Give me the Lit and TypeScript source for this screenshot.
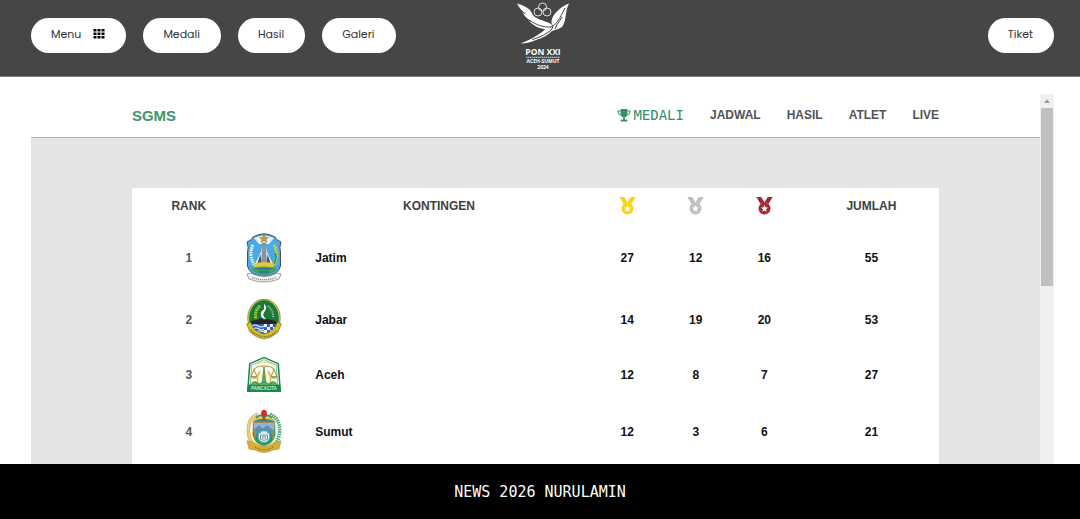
import { LitElement, html, svg, css } from "lit";
import { customElement } from "lit/decorators.js";

const jatim = html`<svg width="36" height="50" viewBox="0 0 36 50" aria-hidden="true">
  <path d="M7 4Q13 .8 18 .8T29 4Q30 7 35 9Q33 14 34.5 20V33Q33 41 18 45Q3 41 1.500 33V20Q3 14 1 9Q6 7 7 4Z" fill="#4aaae4" stroke="#4b4b55" stroke-width="1"/>
  <path d="M8 5Q18 0 28 5L23 11H13Z" fill="#e9eef2"/>
  <path d="M18 1.500l1.200 3 3.200.1-2.500 1.900.9 3-2.800-1.800-2.800 1.800.9-3-2.500-1.900 3.200-.1z" fill="#c3a02e" stroke="#6a5b22" stroke-width=".4"/>
  <path d="M8 33L15 19 17 9H19L21 19 28 33Z" fill="#f7f9fa"/>
  <path d="M16.700 10h2.600l1.200 22h-5z" fill="#8c96a8" stroke="#555f70" stroke-width=".5"/>
  <path d="M11 31l3.500-10 1 10zM20.500 31l1-10 3.500 10z" fill="#45586c"/>
  <path d="M7 12Q2 22 9 33" fill="none" stroke="#eef7f4" stroke-width="3" stroke-dasharray="1.600 .8"/>
  <path d="M28 12Q34 22 27 33" fill="none" stroke="#d9d23c" stroke-width="3" stroke-dasharray="1.600 .8"/>
  <path d="M29.500 20Q31 28 26 34" fill="none" stroke="#2f8b46" stroke-width="1.400"/>
  <path d="M7 31Q18 27 29 31L27 34H9Z" fill="#e7c832"/>
  <path d="M10 34H26V37H10Z" fill="#2ea0d8"/>
  <path d="M5 35Q18 32 31 35Q28 41 18 43Q8 41 5 35Z" fill="#42a065"/>
  <path d="M11 36H25M13 39H23" stroke="#1c71ad" stroke-width="1.300"/>
  <path d="M1 41L5 40Q18 47 31 40L35 41 33 46Q18 52 3 46Z" fill="#f4f2f2" stroke="#777" stroke-width=".7"/>
  <path d="M6 44.500Q18 49 30 44.500" fill="none" stroke="#8b8888" stroke-width="1.300" stroke-dasharray="1.200 .8"/>
</svg>`;

const jabar = html`<svg width="36" height="41" viewBox="0 0 36 41" aria-hidden="true">
  <ellipse cx="18" cy="19" rx="15.500" ry="18.300" fill="#167a3a" stroke="#d8c934" stroke-width="1.300"/>
  <ellipse cx="18" cy="19" rx="16.300" ry="18.900" fill="none" stroke="#4d4b20" stroke-width=".5"/>
  <path d="M14 7Q8 12 10 20" fill="none" stroke="#b7ca38" stroke-width="3" stroke-dasharray="1.500 .8"/>
  <path d="M22 7Q28 12 27 19" fill="none" stroke="#a8c8a0" stroke-width="2" stroke-dasharray="1.200 1.100"/>
  <path d="M18 5Q22 8 19 12Q15 16 20 20Q15 20 15 16Q14 13 18 10Z" fill="#f6fbf5"/>
  <path d="M4 22L11 21 15 19 18 21 22 20 32 23V27H4Z" fill="#242524"/>
  <path d="M5 25H31Q29 35 18 37Q7 35 5 25Z" fill="#3462bd"/>
  <path d="M6 27Q9 25 12 27T18 27M7 30Q10 28 13 30T18 30M10 33Q13 31 18 33" fill="none" stroke="#eef4ff" stroke-width="1.100"/>
  <path d="M18 25h3v3h-3zM24 25h3v3h-3zM21 28h3v3h-3zM27 28h3v3h-3zM18 31h3v3h-3zM24 31h3v3h-3z" fill="#f5f7fb"/>
  <path d="M.6 25L5 23Q6 32 18 35Q30 32 31 23L35.400 25 32 33Q26 39 18 40Q10 39 4 33Z" fill="#d9bf2c" stroke="#6c5f18" stroke-width=".6"/>
  <path d="M5 31Q10 37 18 37.500T31 31" fill="none" stroke="#766817" stroke-width="1.200" stroke-dasharray="1.300 .8"/>
</svg>`;

const aceh = html`<svg width="36" height="37" viewBox="0 0 36 36" preserveAspectRatio="none" aria-hidden="true">
  <path d="M18 .8L33 7L35 35H1L3 7Z" fill="#148b4a"/>
  <path d="M18 2.300L31.500 7.800 33 28H3L4.500 7.800Z" fill="#fff"/>
  <path d="M18 3.500L30.500 8.700 31.500 28H4.500L5.500 8.700Z" fill="#fbfaf0" stroke="#2c9a58" stroke-width=".6"/>
  <path d="M9 8Q18 4 27 8" fill="none" stroke="#dac98a" stroke-width="1.500" stroke-dasharray="1.500 .8"/>
  <path d="M18 10L20 27H16Z" fill="#73ab2f" stroke="#327b35" stroke-width=".6"/>
  <path d="M18 10Q12 9 8 13M18 10Q24 9 28 13M8 13L5 20H11ZM28 13L25 20H31Z" fill="none" stroke="#ad9951" stroke-width="1"/>
  <path d="M5 20Q8 23 11 20M25 20Q28 23 31 20" fill="none" stroke="#ad9951" stroke-width="1.400"/>
  <path d="M12 27Q10 20 14 15M24 27Q26 20 22 15" fill="none" stroke="#d6c34d" stroke-width="1.700"/>
  <path d="M5 28Q9 22 13 28M23 28Q27 22 31 28M12 28Q18 23 24 28" fill="#6eb53c" stroke="#26934c" stroke-width="1"/>
  <path d="M1.800 28H34.200L35 35H1Z" fill="#148b4a"/>
  <text x="18" y="33.500" text-anchor="middle" font-family="Liberation Sans, sans-serif" font-size="4.500" font-weight="700" fill="#d5ecd8">PANCACITA</text>
</svg>`;

const sumut = html`<svg width="36" height="45" viewBox="0 0 36 44" preserveAspectRatio="none" aria-hidden="true">
  <path d="M12 5Q1 10 2.500 23Q3 30 8 35" fill="none" stroke="#dcb95b" stroke-width="3.600"/>
  <path d="M12 5Q1 10 2.500 23Q3 30 8 35" fill="none" stroke="#f7edc8" stroke-width="1.500" stroke-dasharray="1 1.200"/>
  <path d="M24 5Q35 10 33.500 23Q33 30 28 35" fill="none" stroke="#45a77b" stroke-width="3.600" stroke-dasharray="1.500 .8"/>
  <path d="M7 10Q18 5 29 10L30 25Q28 35 18 38Q8 35 6 25Z" fill="#e2c364"/>
  <path d="M7.500 12Q18 7 28.500 12L29 26Q27 34 18 36Q9 34 7 26Z" fill="#249667"/>
  <path d="M8 13H28V22H8Z" fill="#86b9da"/>
  <path d="M8 20L13 16 17 19 21 16 28 21V25H8Z" fill="#678bad"/>
  <path d="M8 13H28" stroke="#bb7b61" stroke-width="1.400"/>
  <path d="M9 21V29M27 21V29" stroke="#b78a46" stroke-width="1.400"/>
  <circle cx="18" cy="27" r="6" fill="#d7edf1" stroke="#379fb2" stroke-width="1.300" stroke-dasharray="2 .8"/>
  <path d="M14.500 25.500h7v4q-3.500 2.500-7 0z" fill="#fff" stroke="#557f8d" stroke-width=".8"/>
  <path d="M16 27h4M16 28.500h4" stroke="#4d7278" stroke-width=".7"/>
  <path d="M10 9Q14 4 18 8Q22 4 26 9" fill="none" stroke="#4a9858" stroke-width="2"/>
  <path d="M15.500 2L18 .5 20.500 2 21 5 19 8H17L15 5Z" fill="#d82831"/>
  <path d="M17 7h2v4h-2z" fill="#c03535"/>
  <path d="M1 31L8 33Q18 41 28 33L35 31 33 39 27 40Q18 45 9 40L3 39Z" fill="#d8ad38" stroke="#b18a2c" stroke-width=".6"/>
  <path d="M9 37Q18 43 27 37" fill="none" stroke="#8e6d22" stroke-width="1.100" stroke-dasharray="1.200 .8"/>
</svg>`;

const rows = [
  { emblem: jatim, name: "Jatim", medals: [27, 12, 16], total: 55 },
  { emblem: jabar, name: "Jabar", medals: [14, 19, 20], total: 53 },
  { emblem: aceh, name: "Aceh", medals: [12, 8, 7], total: 27 },
  { emblem: sumut, name: "Sumut", medals: [12, 3, 6], total: 21 },
];

const medalShape = svg`<path fill="currentColor" fill-rule="evenodd" d="M0.300 0H5.200L8.500 5.200Q6.200 5.800 4.700 7.200ZM16.700 0H11.800L8.500 5.200Q10.800 5.800 12.300 7.200ZM8.500 5.600A6 6 0 1 1 8.500 17.600A6 6 0 1 1 8.500 5.600ZM8.500 8.100L7.500 10.300 5.100 10.600 6.900 12.300 6.400 14.700 8.500 13.500 10.600 14.700 10.100 12.300 11.900 10.600 9.500 10.300Z"/>`;

const medals = [
  { tone: "gold", label: "Emas" },
  { tone: "silver", label: "Perak" },
  { tone: "bronze", label: "Perunggu" },
];

@customElement("app-root")
export class AppRoot extends LitElement {
  static styles = css`
    :host {
      display: flex;
      flex-direction: column;
      height: 100vh;
      background: #fff;
      color: #111;
      font-family: "Liberation Sans", Arial, sans-serif;
      font-size: 12px;
    }
    * {
      box-sizing: border-box;
    }
    a {
      color: inherit;
      text-decoration: none;
    }
    .top {
      flex: none;
      display: grid;
      grid-template-columns: 1fr auto 1fr;
      align-items: start;
      padding: 0 26px 0 31px;
      background: #464646;
      border-bottom: 1px solid #808080;
    }
    .group {
      display: flex;
      gap: 17px;
      padding-top: 18px;
    }
    .end {
      justify-content: flex-end;
    }
    .pill {
      display: flex;
      align-items: center;
      gap: 12px;
      height: 35px;
      padding: 0 21px 3px 20px;
      border: 0;
      border-radius: 18px;
      background: #fff;
      color: #333;
      font: 400 11px/18px Poppins, Inter, sans-serif;
      cursor: pointer;
    }
    .logo {
      display: block;
      height: 76px;
    }
    .logo svg {
      display: block;
    }
    .main {
      flex: 1;
      min-height: 0;
      display: flex;
      margin: 17px 26px 0 31px;
      overflow: hidden;
    }
    .view {
      flex: 1;
      min-width: 0;
      background: #e4e4e4;
    }
    .bar {
      display: flex;
      align-items: center;
      justify-content: space-between;
      height: 44px;
      padding: 0 10% 1px;
      background: #fff;
      border-bottom: 1px solid #8cc4ac;
      font-weight: 700;
      color: #505456;
    }
    .brand {
      font-size: 15px;
      color: #439669;
    }
    .links {
      display: flex;
      align-items: center;
      gap: 26px;
    }
    .active {
      display: flex;
      align-items: center;
      gap: 2px;
      color: #348f66;
      font: 400 14px/16px "DejaVu Sans Mono", monospace;
    }
    .card {
      margin: 50px 10% 0;
      min-height: 400px;
      background: #fff;
    }
    table {
      width: 100%;
      table-layout: fixed;
      border-collapse: collapse;
      text-align: center;
      font-weight: 700;
    }
    th {
      height: 37px;
      padding: 0 0 2px;
      color: #404040;
    }
    td {
      padding: 8px 0;
    }
    th svg,
    td svg {
      display: block;
    }
    th svg {
      margin: 0 auto;
    }
    .c-rank {
      width: 14.1%;
    }
    .c-emblem {
      width: 4.9%;
    }
    .c-medal {
      width: 8.5%;
    }
    .c-total {
      width: 17.4%;
    }
    .total {
      padding-left: 5px;
    }
    .rank {
      color: #555;
    }
    .name {
      padding-left: 30px;
      text-align: left;
    }
    .gold {
      color: #f8d21c;
    }
    .silver {
      color: #c0c0c0;
    }
    .bronze {
      color: #a52a30;
    }
    .scroll {
      flex: none;
      display: flex;
      flex-direction: column;
      width: 14px;
      padding: 0 1px;
      background: #f0f0f0;
    }
    .scroll svg {
      flex: none;
      display: block;
    }
    .track {
      flex: 1;
    }
    .thumb {
      height: 50%;
      background: #c0c0c0;
    }
    .foot {
      flex: none;
      padding: 18px 0 17px;
      background: #000;
      color: #fff;
      text-align: center;
      font: 400 15px/20px "DejaVu Sans Mono", monospace;
    }
  `;

  render() {
    return html`
      <header class="top">
        <nav class="group">
          <button class="pill" type="button">
            Menu
            <svg width="12" height="10" viewBox="0 0 12 10" aria-hidden="true">
              <path d="M.5 0h3v2.600h-3zM4.500 0h3v2.600h-3zM8.500 0h3v2.600h-3zM.5 3.500h3v2.600h-3zM4.500 3.500h3v2.600h-3zM8.500 3.500h3v2.600h-3zM.5 7h3v2.600h-3zM4.500 7h3v2.600h-3zM8.500 7h3v2.600h-3z" />
            </svg>
          </button>
          <a class="pill" href="#medali">Medali</a>
          <a class="pill" href="#hasil">Hasil</a>
          <a class="pill" href="#galeri">Galeri</a>
        </nav>
        <a class="logo" href="#">
          <svg width="54" height="72" viewBox="0 0 54 72" role="img" aria-label="PON XXI Aceh-Sumut 2024">
            <path fill="#fff" d="M1 3.500C5 4.500 10 6.500 13.500 9.500C16 12 16 15 19 17C23 20 30 21 36 24.500C34.500 20 37 16 40 12.500C44 8.500 48 5 53 3.500C50.500 8 50.500 12 49.500 17C49 21 48 24 46 27C43 29 40 29.500 36 31C32 35 27 38 20 40C15 42 10 43.500 4.500 43.500C11 41 18 38 23 34C26 32 28 31 29 29C23 28.500 17 25.500 12.500 20.500C14 21.500 15 21.500 16 21.500C12 19.500 8.500 16.500 6.500 12.500C8 13.500 9 14 10 14C6 11.500 3 7.500 1 3.500Z"/>
            <path fill="none" stroke="#464646" stroke-width="1" d="M14 20.500C20 25 28 27.500 35 27C40 25 43 20 49 8M36 24.500C37.500 28 36 30 31 33C26 36 22 38 16 39.500M39 29C40 25 44 21 46 17"/>
            <g fill="none" stroke="#ddd" stroke-width="1">
              <circle cx="26.500" cy="7" r="4"/>
              <circle cx="22" cy="12" r="4"/>
              <circle cx="31" cy="12" r="4"/>
            </g>
            <g fill="#fff" text-anchor="middle" font-family="Open Sans, sans-serif" font-weight="700">
              <text x="27" y="54.500" font-size="8.500">PON XXI</text>
              <text x="27" y="63.300" font-size="5">ACEH-SUMUT</text>
              <text x="27" y="68.500" font-size="5">2024</text>
            </g>
            <path d="M10 57.300H44" stroke="#bbb" stroke-width="1.200" stroke-dasharray="1.500 .5"/>
          </svg>
        </a>
        <nav class="group end"><a class="pill" href="#tiket">Tiket</a></nav>
      </header>

      <main class="main">
        <div class="view">
          <div class="bar">
            <a class="brand" href="#">SGMS</a>
            <nav class="links">
              <a class="active" href="#medali">
                <svg width="14" height="13" viewBox="0 0 14 13" aria-hidden="true">
                  <path fill="currentColor" d="M3.500 0h7v4.500Q10.300 7.300 7.800 8.400V10.500H9.500Q10.500 10.700 10.500 12.500h-7Q3.500 10.700 4.500 10.500H6.200V8.400Q3.700 7.300 3.500 4.500Z"/>
                  <path fill="none" stroke="currentColor" d="M3.500 2H.6Q.7 6 4.800 6.700M10.500 2h2.900Q13.300 6 9.200 6.700"/>
                </svg>MEDALI</a>
              <a href="#jadwal">JADWAL</a>
              <a href="#hasil">HASIL</a>
              <a href="#atlet">ATLET</a>
              <a href="#live">LIVE</a>
            </nav>
          </div>
          <section class="card">
            <table>
              <colgroup>
                <col class="c-rank" />
                <col class="c-emblem" />
                <col />
                <col class="c-medal" />
                <col class="c-medal" />
                <col class="c-medal" />
                <col class="c-total" />
              </colgroup>
              <thead>
                <tr>
                  <th>RANK</th>
                  <th></th>
                  <th>KONTINGEN</th>
                  ${medals.map(
                    (m) => html`<th class=${m.tone}>
                      <svg width="17" height="18" viewBox="0 0 17 18" role="img" aria-label=${m.label}>${medalShape}</svg>
                    </th>`
                  )}
                  <th class="total">JUMLAH</th>
                </tr>
              </thead>
              <tbody>
                ${rows.map(
                  (r, i) => html`<tr>
                    <td class="rank">${i + 1}</td>
                    <td>${r.emblem}</td>
                    <td class="name">${r.name}</td>
                    ${r.medals.map((n) => html`<td>${n}</td>`)}
                    <td class="total">${r.total}</td>
                  </tr>`
                )}
              </tbody>
            </table>
          </section>
        </div>
        <div class="scroll" aria-hidden="true">
          <svg width="12" height="14" viewBox="0 0 12 14"><path d="M3 9L6 5.500 9 9Z" fill="#999"/></svg>
          <div class="track"><div class="thumb"></div></div>
        </div>
      </main>

      <footer class="foot">NEWS 2026 NURULAMIN</footer>
    `;
  }
}
